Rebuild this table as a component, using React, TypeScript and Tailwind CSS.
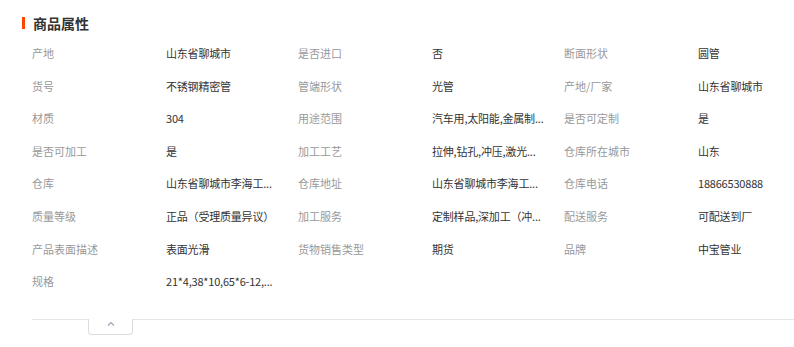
const ROWS: [string, string][][] = [
  [['产地', '山东省聊城市'], ['是否进口', '否'], ['断面形状', '圆管']],
  [['货号', '不锈钢精密管'], ['管端形状', '光管'], ['产地/厂家', '山东省聊城市']],
  [['材质', '304'], ['用途范围', '汽车用,太阳能,金属制...'], ['是否可定制', '是']],
  [['是否可加工', '是'], ['加工工艺', '拉伸,钻孔,冲压,激光...'], ['仓库所在城市', '山东']],
  [['仓库', '山东省聊城市李海工...'], ['仓库地址', '山东省聊城市李海工...'], ['仓库电话', '18866530888']],
  [['质量等级', '正品（受理质量异议）'], ['加工服务', '定制样品,深加工（冲...'], ['配送服务', '可配送到厂']],
  [['产品表面描述', '表面光滑'], ['货物销售类型', '期货'], ['品牌', '中宝管业']],
  [['规格', '21*4,38*10,65*6-12,...']],
]

export default function App() {
  return (
    <div
      className="w-[794px] h-[347px] bg-white overflow-hidden pt-[12px] text-[11px]"
      style={{ fontFamily: '"Noto Sans CJK SC", "Noto Sans", sans-serif' }}
    >
      {/* Title */}
      <div className="flex items-center h-[21px] pl-[22px]">
        <span className="w-[3px] h-[12px] bg-[#ff4400]" />
        <h3 className="ml-[8px] text-[14px] font-bold text-[#333] leading-none">商品属性</h3>
      </div>

      {/* Attributes */}
      <div className="mt-[4px] pl-[32px]">
        {ROWS.map((row, i) => (
          <div key={i} className="grid grid-cols-[134px_132px_134px_132px_134px_1fr] h-[32.6px] items-center">
            {row.map(([label, value]) => (
              <div key={label} className="contents">
                <span className="text-[#999] whitespace-nowrap">{label}</span>
                <span className="text-[#333] whitespace-nowrap tracking-[-0.2px]">{value}</span>
              </div>
            ))}
          </div>
        ))}
      </div>

      {/* Collapse */}
      <div className="mt-[21px] ml-[32px] border-t border-[#e6e6e6] relative">
        <button className="absolute -top-px left-[56px] w-[45px] h-[16px] bg-white border border-t-0 border-[#dcdcdc] rounded-b-[4px] flex justify-center pt-[2px]">
          <svg width="8" height="5" viewBox="0 0 8 5" fill="none">
            <polyline points="1,4.5 4,1.5 7,4.5" stroke="#9aa3b5" strokeWidth="1.1" />
          </svg>
        </button>
      </div>
    </div>
  )
}
